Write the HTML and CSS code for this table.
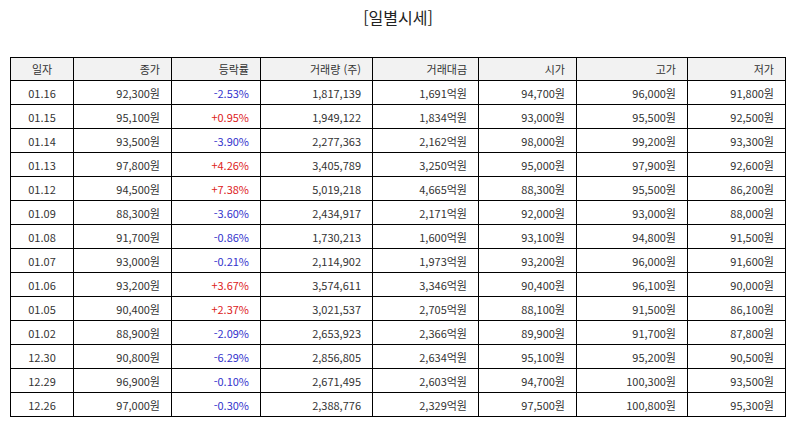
FILE: index.html
```html
<!DOCTYPE html>
<html lang="ko">
<head>
<meta charset="utf-8">
<title>일별시세</title>
<link rel="stylesheet" href="styles.css">
</head>
<body>
<div class="page">
  <h1 class="title">[일별시세]</h1>
  <table class="quotes">
    <colgroup>
      <col class="c-date"><col class="c-close"><col class="c-rate"><col class="c-vol"><col class="c-amt"><col class="c-open"><col class="c-high"><col class="c-low">
    </colgroup>
    <thead>
      <tr><th class="center">일자</th><th>종가</th><th>등락률</th><th>거래량 (주)</th><th>거래대금</th><th>시가</th><th>고가</th><th>저가</th></tr>
    </thead>
    <tbody>
      <tr><td class="center">01.16</td><td>92,300원</td><td class="down">-2.53%</td><td>1,817,139</td><td>1,691억원</td><td>94,700원</td><td>96,000원</td><td>91,800원</td></tr>
      <tr><td class="center">01.15</td><td>95,100원</td><td class="up">+0.95%</td><td>1,949,122</td><td>1,834억원</td><td>93,000원</td><td>95,500원</td><td>92,500원</td></tr>
      <tr><td class="center">01.14</td><td>93,500원</td><td class="down">-3.90%</td><td>2,277,363</td><td>2,162억원</td><td>98,000원</td><td>99,200원</td><td>93,300원</td></tr>
      <tr><td class="center">01.13</td><td>97,800원</td><td class="up">+4.26%</td><td>3,405,789</td><td>3,250억원</td><td>95,000원</td><td>97,900원</td><td>92,600원</td></tr>
      <tr><td class="center">01.12</td><td>94,500원</td><td class="up">+7.38%</td><td>5,019,218</td><td>4,665억원</td><td>88,300원</td><td>95,500원</td><td>86,200원</td></tr>
      <tr><td class="center">01.09</td><td>88,300원</td><td class="down">-3.60%</td><td>2,434,917</td><td>2,171억원</td><td>92,000원</td><td>93,000원</td><td>88,000원</td></tr>
      <tr><td class="center">01.08</td><td>91,700원</td><td class="down">-0.86%</td><td>1,730,213</td><td>1,600억원</td><td>93,100원</td><td>94,800원</td><td>91,500원</td></tr>
      <tr><td class="center">01.07</td><td>93,000원</td><td class="down">-0.21%</td><td>2,114,902</td><td>1,973억원</td><td>93,200원</td><td>96,000원</td><td>91,600원</td></tr>
      <tr><td class="center">01.06</td><td>93,200원</td><td class="up">+3.67%</td><td>3,574,611</td><td>3,346억원</td><td>90,400원</td><td>96,100원</td><td>90,000원</td></tr>
      <tr><td class="center">01.05</td><td>90,400원</td><td class="up">+2.37%</td><td>3,021,537</td><td>2,705억원</td><td>88,100원</td><td>91,500원</td><td>86,100원</td></tr>
      <tr><td class="center">01.02</td><td>88,900원</td><td class="down">-2.09%</td><td>2,653,923</td><td>2,366억원</td><td>89,900원</td><td>91,700원</td><td>87,800원</td></tr>
      <tr><td class="center">12.30</td><td>90,800원</td><td class="down">-6.29%</td><td>2,856,805</td><td>2,634억원</td><td>95,100원</td><td>95,200원</td><td>90,500원</td></tr>
      <tr><td class="center">12.29</td><td>96,900원</td><td class="down">-0.10%</td><td>2,671,495</td><td>2,603억원</td><td>94,700원</td><td>100,300원</td><td>93,500원</td></tr>
      <tr><td class="center">12.26</td><td>97,000원</td><td class="down">-0.30%</td><td>2,388,776</td><td>2,329억원</td><td>97,500원</td><td>100,800원</td><td>95,300원</td></tr>
    </tbody>
  </table>
</div>
</body>
</html>
```

FILE: styles.css
```css
html, body {
  margin: 0;
  padding: 0;
  background: #fff;
}
.page {
  padding: 0 8px 0 10px;
  font-family: "Noto Sans CJK KR", "Noto Sans", sans-serif;
  color: #333;
}
.title {
  margin: 0;
  padding-top: 6px;
  height: 57px;
  box-sizing: border-box;
  font-size: 16px;
  font-weight: normal;
  line-height: 22px;
  text-align: center;
  color: #222;
}
.quotes {
  width: 776px;
  table-layout: fixed;
  border-collapse: collapse;
  font-size: 11px;
}
.c-date { width: 63px; }
.c-close { width: 98px; }
.c-rate { width: 89px; }
.c-vol { width: 112px; }
.c-amt { width: 106px; }
.c-open { width: 98px; }
.c-high { width: 111px; }
.c-low { width: 98px; }
.quotes th,
.quotes td {
  border: 1px solid #000;
  padding: 0 11px 0 4px;
  height: 23px;
  text-align: right;
  font-weight: normal;
  white-space: nowrap;
  line-height: 14px;
}
.quotes th {
  background: #f2f2f2;
  height: 22px;
}
.quotes .center {
  text-align: center;
  padding: 0;
}
.up { color: #dd2222; }
.down { color: #3333cc; }
```
